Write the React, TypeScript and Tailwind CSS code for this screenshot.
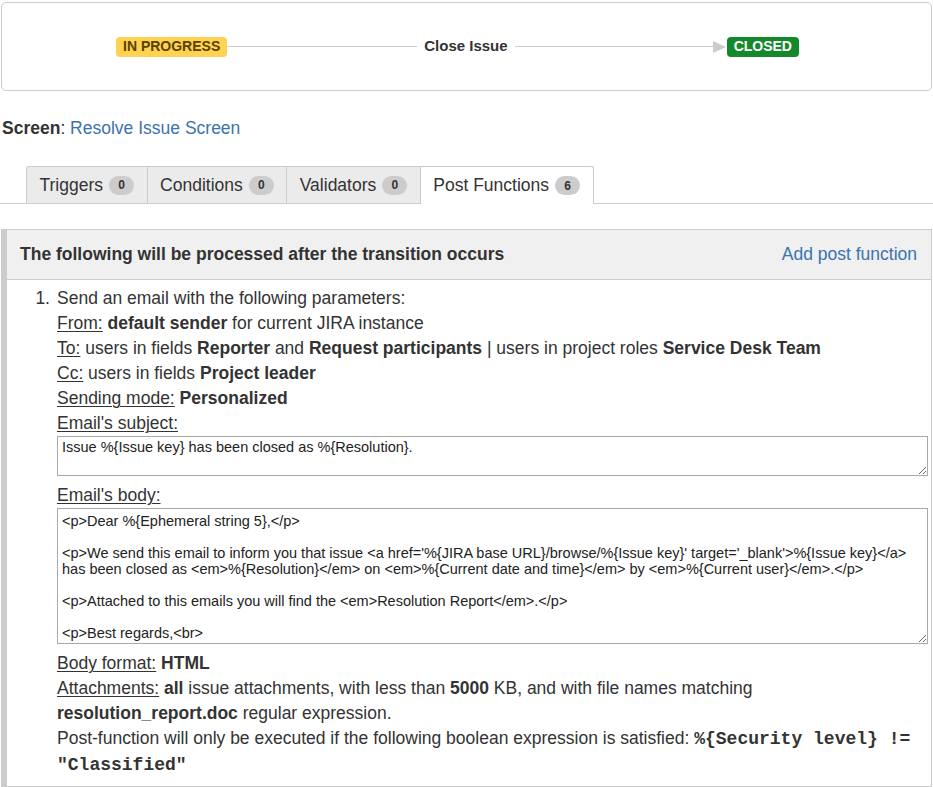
const font = { fontFamily: '"Liberation Sans", Arial, sans-serif' };

function Badge({ n }: { n: number }) {
  return (
    <span className="ml-[6px] inline-flex h-[19px] min-w-[25px] items-center justify-center rounded-full bg-[#ccc] px-[8px] text-[12px] font-bold leading-none text-[#333]">
      {n}
    </span>
  );
}

function Tab({ label, count, active, first }: { label: string; count: number; active?: boolean; first?: boolean }) {
  return (
    <div
      className={
        "flex h-[37px] items-center border-t border-r border-[#ccc] px-[12.5px] text-[17.5px] " +
        (first ? "rounded-tl-[3px] border-l " : "") +
        (active ? "-mb-px h-[38px] rounded-tr-[3px] bg-white text-[#333]" : "bg-[#ebebeb] text-[#333]")
      }
    >
      {label}
      <Badge n={count} />
    </div>
  );
}

function Label({ children }: { children: React.ReactNode }) {
  return <span className="underline decoration-1 underline-offset-2">{children}</span>;
}

const subject = "Issue %{Issue key} has been closed as %{Resolution}.";
const body = `<p>Dear %{Ephemeral string 5},</p>

<p>We send this email to inform you that issue <a href='%{JIRA base URL}/browse/%{Issue key}' target='_blank'>%{Issue key}</a>
has been closed as <em>%{Resolution}</em> on <em>%{Current date and time}</em> by <em>%{Current user}</em>.</p>

<p>Attached to this emails you will find the <em>Resolution Report</em>.</p>

<p>Best regards,<br>`;

export default function App() {
  return (
    <div className="w-[933px] bg-white text-[#333]" style={font}>
      <div className="px-px pt-[2px]">
        <div className="flex h-[89px] items-center rounded-[5px] border border-[#ccc] pl-[114px]">
          <span className="flex h-[20px] items-center rounded-[4px] bg-[#ffd351] px-[7px] text-[14px] font-bold text-[#594300]">
            IN PROGRESS
          </span>
          <span className="h-px w-[190px] bg-[#ccc]" />
          <span className="px-[7px] text-[15px] font-bold text-[#333]">Close Issue</span>
          <span className="h-px w-[198px] bg-[#ccc]" />
          <svg width="13" height="12" viewBox="0 0 13 12" className="mr-px">
            <path d="M0 0 L13 6 L0 12 Z" fill="#ccc" />
          </svg>
          <span className="flex h-[20px] items-center rounded-[4px] bg-[#14892c] px-[7px] text-[14px] font-bold text-white">
            CLOSED
          </span>
        </div>
      </div>

      <div className="mt-[25px] pl-[2px] text-[17.5px] leading-[25px]">
        <span className="font-bold">Screen</span>: <span className="text-[#3b73af]">Resolve Issue Screen</span>
      </div>

      <div className="mt-[25px] flex border-b border-[#ccc] pl-[26px]">
        <Tab label="Triggers" count={0} first />
        <Tab label="Conditions" count={0} />
        <Tab label="Validators" count={0} />
        <Tab label="Post Functions" count={6} active />
      </div>

      <div className="ml-[1px] mr-[1px] mt-[25px] border-l-[6px] border-t border-r border-b border-[#ccc]">
        <div className="flex h-[50px] items-center justify-between border-b border-[#ccc] bg-[#f0f0f0] pl-[13px] pr-[14px] text-[17.5px]">
          <span className="font-bold">The following will be processed after the transition occurs</span>
          <span className="text-[#3b73af]">Add post function</span>
        </div>
        <div className="flex pb-[8px] pt-[6px] pr-[3px] text-[17.5px] leading-[25px]">
          <div className="w-[50px] shrink-0 pr-[7px] text-right">1.</div>
          <div className="min-w-0 flex-1">
            <div>Send an email with the following parameters:</div>
            <div>
              <Label>From:</Label> <b>default sender</b> for current JIRA instance
            </div>
            <div>
              <Label>To:</Label> users in fields <b>Reporter</b> and <b>Request participants</b> | users in project roles{" "}
              <b>Service Desk Team</b>
            </div>
            <div>
              <Label>Cc:</Label> users in fields <b>Project leader</b>
            </div>
            <div>
              <Label>Sending mode:</Label> <b>Personalized</b>
            </div>
            <div>
              <Label>Email's subject:</Label>
            </div>
            <textarea
              readOnly
              defaultValue={subject}
              className="block h-[40px] w-full resize-y border border-[#a9a9a9] px-[4px] py-[2px] text-[14.5px] leading-[16px] text-[#222] outline-none"
              style={font}
            />
            <div className="mt-[7px]">
              <Label>Email's body:</Label>
            </div>
            <textarea
              readOnly
              defaultValue={body}
              className="block h-[136px] w-full resize-y border border-[#a9a9a9] px-[4px] py-[4px] text-[14.5px] leading-[16px] text-[#222] outline-none"
              style={font}
            />
            <div className="mt-[7px]">
              <Label>Body format:</Label> <b>HTML</b>
            </div>
            <div>
              <Label>Attachments:</Label> <b>all</b> issue attachments, with less than <b>5000</b> KB, and with file names
              matching <b>resolution_report.doc</b> regular expression.
            </div>
            <div>
              Post-function will only be executed if the following boolean expression is satisfied:{" "}
              <code
                className="text-[18px] font-bold leading-[25px]"
                style={{ fontFamily: '"Liberation Mono", "Courier New", monospace' }}
              >
                %{"{"}Security level{"}"} != "Classified"
              </code>
            </div>
          </div>
        </div>
      </div>
    </div>
  );
}
